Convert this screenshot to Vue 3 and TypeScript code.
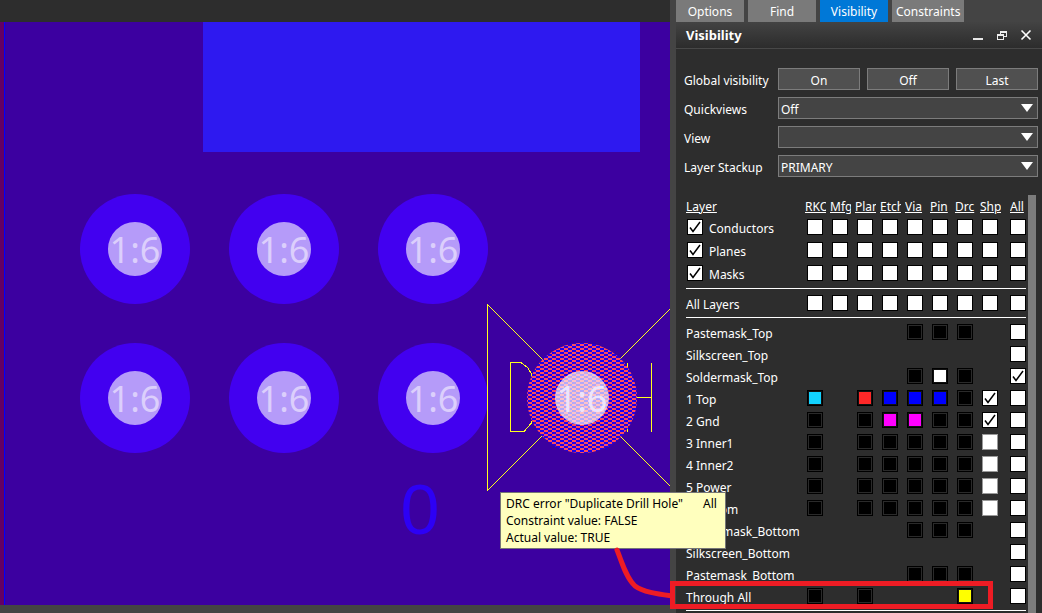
<script setup lang="ts">
import { ref } from 'vue'

interface Tab { name: string; active: boolean }
interface GroupRow { name: string; toggle: boolean }
interface LayerRow { name: string; cells: string; all: boolean }

const tabs: Tab[] = [
  { name: 'Options', active: false },
  { name: 'Find', active: false },
  { name: 'Visibility', active: true },
  { name: 'Constraints', active: false },
]
const actions: string[] = ['On', 'Off', 'Last']
const selects = [
  { id: 'quickviews', label: 'Quickviews', value: 'Off' },
  { id: 'view', label: 'View', value: '' },
  { id: 'stackup', label: 'Layer Stackup', value: 'PRIMARY' },
]
const columns: string[] = ['RKO', 'Mfg', 'Plan', 'Etch', 'Via', 'Pin', 'Drc', 'Shp', 'All']
const groups: GroupRow[][] = [
  [
    { name: 'Conductors', toggle: true },
    { name: 'Planes', toggle: true },
    { name: 'Masks', toggle: true },
  ],
  [{ name: 'All Layers', toggle: false }],
]

// One letter per column: k/w/c/r/b/m/y swatch colour, v ticked, u unticked, '.' empty
const layers = ref<LayerRow[]>([
  { name: 'Pastemask_Top', cells: '....kkk.', all: false },
  { name: 'Silkscreen_Top', cells: '........', all: false },
  { name: 'Soldermask_Top', cells: '....kwk.', all: true },
  { name: '1 Top', cells: 'c.rbbbkv', all: false },
  { name: '2 Gnd', cells: 'k.kmmkkv', all: false },
  { name: '3 Inner1', cells: 'k.kkkkku', all: false },
  { name: '4 Inner2', cells: 'k.kkkkku', all: false },
  { name: '5 Power', cells: 'k.kkkkku', all: false },
  { name: '6 Bottom', cells: 'k.kkkkku', all: false },
  { name: 'Soldermask_Bottom', cells: '....kkk.', all: false },
  { name: 'Silkscreen_Bottom', cells: '........', all: false },
  { name: 'Pastemask_Bottom', cells: '....kkk.', all: false },
  { name: 'Through All', cells: 'k.k...y.', all: false },
])

const pads = [
  { x: 135, y: 227 }, { x: 284, y: 227 }, { x: 433, y: 227 },
  { x: 135, y: 376 }, { x: 284, y: 376 }, { x: 433, y: 376 },
]
const isCheck = (c: string): boolean => c === 'v' || c === 'u'
</script>

<template>
  <div class="app">
    <main class="workspace">
      <div class="ruler"></div>
      <svg class="board" role="img" aria-label="Board view">
        <defs>
          <pattern id="hatch" width="8" height="4" patternUnits="userSpaceOnUse" shape-rendering="crispEdges">
            <rect width="8" height="4" fill="#1c00f0" />
            <rect width="4" height="2" fill="#ff4b5c" />
            <rect x="4" y="2" width="4" height="2" fill="#ff4b5c" />
          </pattern>
        </defs>
        <rect width="100%" height="100%" fill="#3c00a0" />
        <rect width="4" height="100%" fill="#640064" />
        <rect x="4" width="1" height="100%" fill="#0000ff" />
        <rect x="203" width="437" height="130" fill="#2e19f0" />
        <g v-for="p in pads" :key="`${p.x}-${p.y}`">
          <circle :cx="p.x" :cy="p.y" r="55" fill="#4200f0" />
          <circle :cx="p.x" :cy="p.y" r="27" fill="#b59bf9" />
          <text :x="p.x" :y="p.y + 14" class="drill">1:6</text>
        </g>
        <text x="420" y="512" class="refdes">0</text>
        <g fill="none" stroke="#ffff1e" shape-rendering="crispEdges">
          <path d="M487.5 282V469" />
          <path d="M488 283L564 359M488 468L564 392M670 287L600 357M670 464L600 394" />
          <path d="M531.500 357V352L528 346L521 340.500H510.500V409.500H524L531.500 401V399" />
          <path d="M627.500 341V410M627 375.500H651" />
          <path d="M651.500 341V410" />
        </g>
        <circle cx="582" cy="376" r="55" fill="url(#hatch)" />
        <circle cx="582" cy="376" r="27" fill="#ffffff" fill-opacity="0.66" />
        <text x="582" y="390" class="drill hot">1:6</text>
      </svg>
      <div class="status"></div>
    </main>

    <aside class="dock">
      <nav class="tabs">
        <button v-for="t in tabs" :key="t.name" class="tab" :class="{ active: t.active }">{{ t.name }}</button>
      </nav>
      <section class="panel">
        <header class="title">
          <h1>Visibility</h1>
          <button aria-label="Minimize">
            <svg width="12" height="12"><rect x="1" y="9" width="10" height="2" fill="#e6e6e6" /></svg>
          </button>
          <button aria-label="Restore">
            <svg width="12" height="12" fill="none" stroke="#eee" shape-rendering="crispEdges">
              <path d="M4 2H11M4 3H11M4.500 2V5M10.500 2V7.500H8M1 5H8M1 6H8M1.500 5V10.500H7.500V5" />
            </svg>
          </button>
          <button aria-label="Close">
            <svg width="12" height="12" fill="none" stroke="#fff" stroke-width="1.600"><path d="M1.500 1.500L10.500 10.500M10.500 1.500L1.500 10.500" /></svg>
          </button>
        </header>

        <div class="form">
          <div class="field">
            <span class="caption">Global visibility</span>
            <div class="actions"><button v-for="a in actions" :key="a">{{ a }}</button></div>
          </div>
          <div v-for="s in selects" :key="s.id" class="field">
            <label class="caption" :for="s.id">{{ s.label }}</label>
            <div class="picker">
              <select :id="s.id"><option>{{ s.value }}</option></select>
              <svg width="12" height="8"><path d="M0 0H12L6 8Z" fill="#fff" /></svg>
            </div>
          </div>
        </div>

        <div class="layers">
          <div class="grid">
            <table>
              <colgroup>
                <col />
                <col v-for="n in 8" :key="n" class="narrow" />
                <col class="last" />
              </colgroup>
              <thead>
                <tr>
                  <th class="name"><a href="#">Layer</a></th>
                  <th v-for="c in columns" :key="c"><a href="#">{{ c }}</a></th>
                </tr>
              </thead>
              <tbody v-for="(g, gi) in groups" :key="gi">
                <tr v-for="r in g" :key="r.name" :class="{ tall: r.toggle }">
                  <td class="name">
                    <label v-if="r.toggle"><input type="checkbox" checked />{{ r.name }}</label>
                    <template v-else>{{ r.name }}</template>
                  </td>
                  <td v-for="c in columns" :key="c"><input type="checkbox" :aria-label="`${r.name} ${c}`" /></td>
                </tr>
                <tr class="rule"><td colspan="10"><hr /></td></tr>
              </tbody>
              <tbody>
                <tr v-for="l in layers" :key="l.name">
                  <td class="name">{{ l.name }}</td>
                  <td v-for="(c, i) in l.cells" :key="i">
                    <input v-if="isCheck(c)" type="checkbox" :checked="c === 'v'" :class="{ soft: c === 'u' }" :aria-label="`${l.name} ${columns[i]}`" />
                    <button v-else-if="c !== '.'" class="swatch" :class="c" :aria-label="`${l.name} ${columns[i]} colour`"></button>
                  </td>
                  <td><input v-model="l.all" type="checkbox" :aria-label="`${l.name} All`" /></td>
                </tr>
                <tr class="rule"><td colspan="10"><hr /></td></tr>
              </tbody>
            </table>
          </div>
          <div class="scroll"></div>
        </div>
      </section>
    </aside>

    <div class="tooltip" role="tooltip">
      <div class="first"><span>DRC error "Duplicate Drill Hole"</span><span>All</span></div>
      <div>Constraint value: FALSE</div>
      <div>Actual value: TRUE</div>
    </div>
    <svg class="markup" fill="none" stroke="#ee1c24" stroke-width="5" aria-hidden="true">
      <path d="M617 550C622 562 626 578 635 586C643 592 658 594 672 596" stroke-linecap="round" />
      <rect x="672.500" y="583.500" width="318" height="23" />
    </svg>
  </div>
</template>

<style>
body { margin: 0; background: #444; }
</style>

<style scoped>
.app {
  position: relative;
  display: flex;
  height: 100vh;
  overflow: hidden;
  background: #444;
  color: #fff;
  font: 12px/16px "Noto Sans", "Open Sans", sans-serif;
}
button, select, input { margin: 0; padding: 0; font: inherit; color: inherit; border-radius: 0; }
.workspace { flex: 1; min-width: 0; display: flex; flex-direction: column; }
.ruler { height: 22px; background: #2d2d2d; }
.board { flex: 1; min-height: 0; width: 100%; display: block; }
.status { height: 8px; background: #444; }
.drill { font-size: 36px; text-anchor: middle; fill: #dccffc; }
.hot { fill: #eee4fa; }
.refdes { font: 70px "Liberation Sans", sans-serif; text-anchor: middle; fill: #2d00f5; }

.dock { width: 366px; margin-left: 6px; display: flex; flex-direction: column; }
.tabs { display: flex; gap: 4px; height: 22px; }
.tab { min-width: 68px; padding: 2px 4px 0; border: 0; background: #7a7a7a; }
.tab.active { background: #0078d7; }
.panel { flex: 1; min-height: 0; display: flex; flex-direction: column; background: #2d2d2d; }
.title {
  display: flex;
  align-items: center;
  gap: 12px;
  height: 26px;
  padding: 0 10px;
  border-bottom: 1px solid #484848;
  background: linear-gradient(#434343, #2c2c2c);
}
.title h1 { flex: 1; margin: 0; font-size: 13px; font-weight: 700; }
.title button { display: flex; border: 0; background: none; }

.form { display: flex; flex-direction: column; gap: 7px; padding: 19px 4px 18px 8px; }
.field { display: flex; align-items: center; height: 22px; }
.caption { width: 94px; padding-top: 3px; white-space: nowrap; }
.actions { flex: 1; display: flex; gap: 7px; }
.actions button { flex: 1; height: 22px; padding-top: 3px; border: 1px solid #7c7c7c; background: #505050; }
.picker { position: relative; flex: 1; display: flex; }
.picker select {
  appearance: none;
  flex: 1;
  height: 22px;
  padding: 3px 2px 0;
  border: 1px solid #7c7c7c;
  background: #444;
}
.picker svg { position: absolute; right: 5px; top: 7px; pointer-events: none; }

.layers { flex: 1; min-height: 0; display: flex; gap: 2px; padding: 0 6px 0 10px; overflow: hidden; }
.scroll { width: 8px; background: #7c7c7c; }
.grid { flex: 1; min-width: 0; }
table { width: 100%; table-layout: fixed; border-collapse: collapse; }
.narrow { width: 25px; }
.last { width: 23px; }
th { height: 19px; padding: 2px 2px 0; font-weight: 400; line-height: 17px; text-align: left; overflow: hidden; white-space: nowrap; }
th a { display: block; overflow: hidden; color: #fff; }
th:last-child { padding: 2px 0 0 7px; }
td { height: 22px; padding: 0 0 0 4px; line-height: 0; }
td:last-child { padding-left: 7px; }
.rule td { height: 7px; padding: 0; }
th.name { padding: 2px 0 0; }
td.name { padding: 3px 0 0; height: 19px; line-height: 16px; white-space: nowrap; }
.tall td { padding-bottom: 1px; height: 22px; }
.tall td.name { padding: 3px 0 0; height: 20px; }
.name label { display: flex; gap: 6px; padding-left: 1px; }
.name label input { margin-top: -2px; }
hr { margin: 0; border: 0; height: 1px; background: #fff; }
input {
  appearance: none;
  display: inline-block;
  flex: none;
  box-sizing: border-box;
  width: 16px;
  height: 16px;
  border: 1px solid #000;
  background: #fff;
  vertical-align: middle;
}
input:checked {
  background: #fff url("data:image/svg+xml,%3Csvg xmlns='http://www.w3.org/2000/svg' width='14' height='14'%3E%3Cpath d='M2 7.500L5 11.500L12 2' fill='none' stroke='%23000' stroke-width='1.500'/%3E%3C/svg%3E");
}
.soft { border-color: #999; }
.swatch {
  display: inline-block;
  width: 16px;
  height: 16px;
  border: 1px solid #000;
  box-shadow: inset 0 0 0 1px #2a2a2a;
  background: #000;
  vertical-align: middle;
}
.w, .c, .r, .b, .m, .y { box-shadow: inset 0 0 0 1px #111; }
.w { background: #fff; }
.c { background: #12d2ff; }
.r { background: #ff2828; }
.b { background: #0000ff; }
.m { background: #ff00ff; }
.y { background: #ffff00; }

.tooltip {
  position: absolute;
  left: 500px;
  top: 492px;
  padding: 2px 8px 2px 5px;
  border: 1px solid #767676;
  background: #ffffbe;
  color: #000;
  line-height: 17px;
  white-space: nowrap;
}
.first { display: flex; gap: 20px; }
.markup { position: absolute; left: 0; top: 0; width: 100%; height: 100%; pointer-events: none; }
</style>
